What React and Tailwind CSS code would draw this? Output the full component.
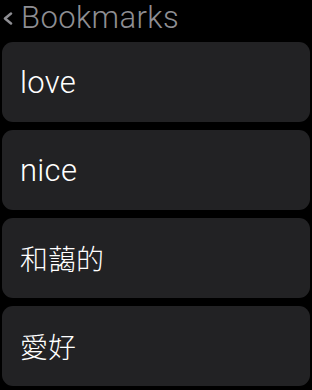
export default function App() {
  const items = [
    { t: "love", cjk: false },
    { t: "nice", cjk: false },
    { t: "和藹的", cjk: true },
    { t: "愛好", cjk: true },
  ];
  return (
    <div className="w-[312px] h-[390px] bg-black overflow-hidden" style={{ fontFamily: '"Roboto", "Noto Sans CJK TC", sans-serif' }}>
      <div className="h-[42px] flex items-start pl-[3px]">
        <svg width="10" height="13" viewBox="0 0 10 13" className="mt-[12px]">
          <path d="M8 1.5 L2 6.5 L8 11.5" fill="none" stroke="#8e8e93" strokeWidth="2.5" strokeLinecap="round" strokeLinejoin="round" />
        </svg>
        <span className="ml-[8px] text-[31px] leading-[36px] tracking-[0.4px] font-light text-[#8e8e93]">Bookmarks</span>
      </div>
      <div className="flex flex-col gap-[8px] px-[2px]">
        {items.map((it) => (
          <div key={it.t} className="h-[80px] rounded-[11px] bg-[#222224] flex items-center pl-[18px]">
            {it.cjk ? (
              <span className="text-[28px] font-light text-white leading-none" style={{ fontFamily: '"Noto Sans CJK TC", sans-serif' }}>{it.t}</span>
            ) : (
              <span className="text-[31px] font-light tracking-[0.3px] text-white leading-none">{it.t}</span>
            )}
          </div>
        ))}
      </div>
    </div>
  );
}
